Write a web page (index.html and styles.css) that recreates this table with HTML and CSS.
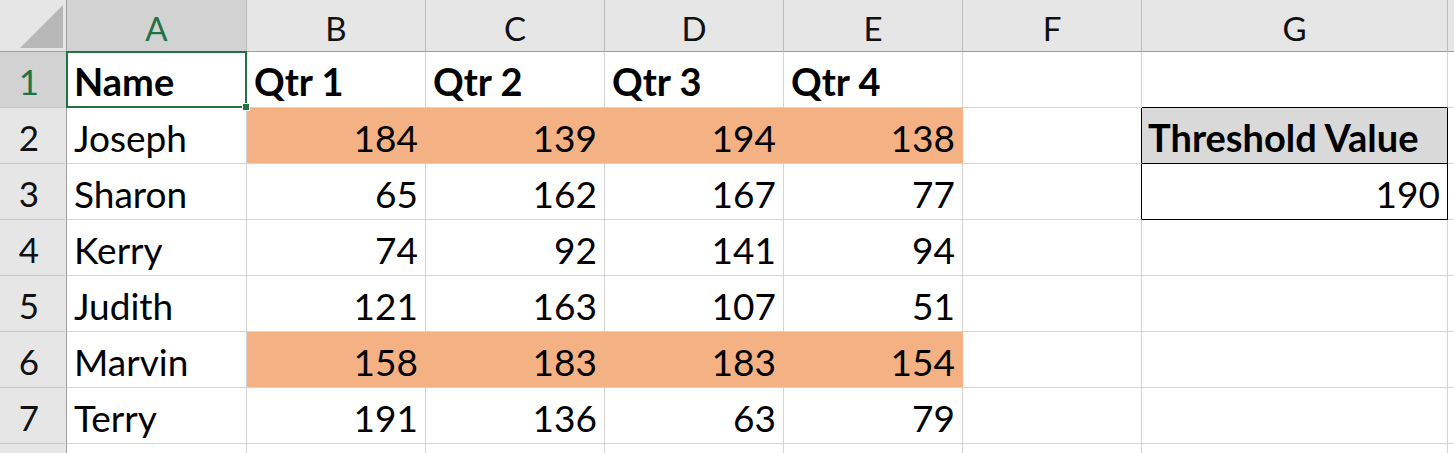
FILE: index.html
```html
<!DOCTYPE html>
<html>
<head>
<meta charset="utf-8">
<link rel="stylesheet" href="styles.css">
</head>
<body>
<div class="sheet">
  <div class="corner"><svg class="tri" width="67" height="52" viewBox="0 0 67 52"><polygon points="63,5 63,48 20,48" fill="#b7b7b7"/></svg></div>
  <div class="colhead sel-col">A</div>
  <div class="colhead">B</div>
  <div class="colhead">C</div>
  <div class="colhead">D</div>
  <div class="colhead">E</div>
  <div class="colhead">F</div>
  <div class="colhead">G</div>
  <div class="colhead last"></div>

  <div class="rowhead sel-row">1</div>
  <div class="cell bold active">Name<span class="handle"></span></div>
  <div class="cell bold">Qtr 1</div>
  <div class="cell bold">Qtr 2</div>
  <div class="cell bold">Qtr 3</div>
  <div class="cell bold">Qtr 4</div>
  <div class="cell"></div>
  <div class="cell bk-b"></div>
  <div class="cell"></div>

  <div class="rowhead">2</div>
  <div class="cell">Joseph</div>
  <div class="cell num hl">184</div>
  <div class="cell num hl">139</div>
  <div class="cell num hl">194</div>
  <div class="cell num hl">138</div>
  <div class="cell bk-r"></div>
  <div class="cell bold thr-head bk-r bk-b">Threshold Value</div>
  <div class="cell"></div>

  <div class="rowhead">3</div>
  <div class="cell">Sharon</div>
  <div class="cell num">65</div>
  <div class="cell num">162</div>
  <div class="cell num">167</div>
  <div class="cell num">77</div>
  <div class="cell bk-r"></div>
  <div class="cell num bk-r bk-b">190</div>
  <div class="cell"></div>

  <div class="rowhead">4</div>
  <div class="cell">Kerry</div>
  <div class="cell num">74</div>
  <div class="cell num">92</div>
  <div class="cell num">141</div>
  <div class="cell num">94</div>
  <div class="cell"></div>
  <div class="cell"></div>
  <div class="cell"></div>

  <div class="rowhead">5</div>
  <div class="cell">Judith</div>
  <div class="cell num">121</div>
  <div class="cell num">163</div>
  <div class="cell num">107</div>
  <div class="cell num">51</div>
  <div class="cell"></div>
  <div class="cell"></div>
  <div class="cell"></div>

  <div class="rowhead">6</div>
  <div class="cell">Marvin</div>
  <div class="cell num hl">158</div>
  <div class="cell num hl">183</div>
  <div class="cell num hl">183</div>
  <div class="cell num hl">154</div>
  <div class="cell"></div>
  <div class="cell"></div>
  <div class="cell"></div>

  <div class="rowhead">7</div>
  <div class="cell">Terry</div>
  <div class="cell num">191</div>
  <div class="cell num">136</div>
  <div class="cell num">63</div>
  <div class="cell num">79</div>
  <div class="cell"></div>
  <div class="cell"></div>
  <div class="cell"></div>

  <div class="rowhead"></div>
  <div class="cell"></div>
  <div class="cell"></div>
  <div class="cell"></div>
  <div class="cell"></div>
  <div class="cell"></div>
  <div class="cell"></div>
  <div class="cell"></div>
  <div class="cell"></div>
</div>
</body>
</html>
```
FILE: styles.css
```css
html, body {
  margin: 0;
  padding: 0;
  background: #fff;
  overflow: hidden;
}
.sheet {
  display: grid;
  grid-template-columns: 67px 180px 179px 179px 179px 179px 179px 306px 1fr;
  grid-template-rows: 52px repeat(8, 56px);
  font-family: Lato, "Open Sans", sans-serif;
  color: #000;
}
.corner {
  background: #e6e6e6;
  border-right: 1px solid #9e9e9e;
  border-bottom: 1px solid #9e9e9e;
  box-sizing: border-box;
}
.tri {
  display: block;
}
.colhead {
  background: #e6e6e6;
  border-right: 1px solid #bcbcbc;
  border-bottom: 1px solid #9e9e9e;
  box-sizing: border-box;
  display: flex;
  align-items: center;
  justify-content: center;
  font-size: 33px;
  color: #111;
  padding-top: 4px;
}
.colhead.sel-col {
  background: #d2d2d2;
  color: #217346;
}
.colhead.last {
  border-right: none;
}
.rowhead {
  background: #e6e6e6;
  border-right: 1px solid #9e9e9e;
  border-bottom: 1px solid #c6c6c6;
  box-sizing: border-box;
  display: flex;
  align-items: center;
  justify-content: center;
  font-size: 35px;
  color: #111;
  padding: 2px 8px 0 0;
}
.rowhead.sel-row {
  background: #d2d2d2;
  color: #217346;
}
.cell {
  border-right: 1px solid #d4d4d4;
  border-bottom: 1px solid #d4d4d4;
  box-sizing: border-box;
  display: flex;
  align-items: center;
  padding: 3px 7px 0 7px;
  font-size: 37px;
  white-space: nowrap;
  position: relative;
}
.cell.num {
  justify-content: flex-end;
}
.cell.bold {
  font-weight: 700;
  font-size: 38px;
}
.cell.hl {
  background: #f4b183;
  border-right-color: #f4b183;
}
.thr-head {
  background: #d9d9d9;
  padding-left: 6px;
}
.bk-r {
  border-right-color: #000;
}
.bk-b {
  border-bottom-color: #000;
}
.active::after {
  content: "";
  position: absolute;
  left: -1px;
  top: -1px;
  right: -1px;
  bottom: -1px;
  border: 2px solid #217346;
  pointer-events: none;
}
.handle {
  position: absolute;
  right: -4px;
  bottom: -4px;
  width: 6px;
  height: 6px;
  background: #217346;
  border: 1px solid #fff;
  z-index: 2;
}
```
